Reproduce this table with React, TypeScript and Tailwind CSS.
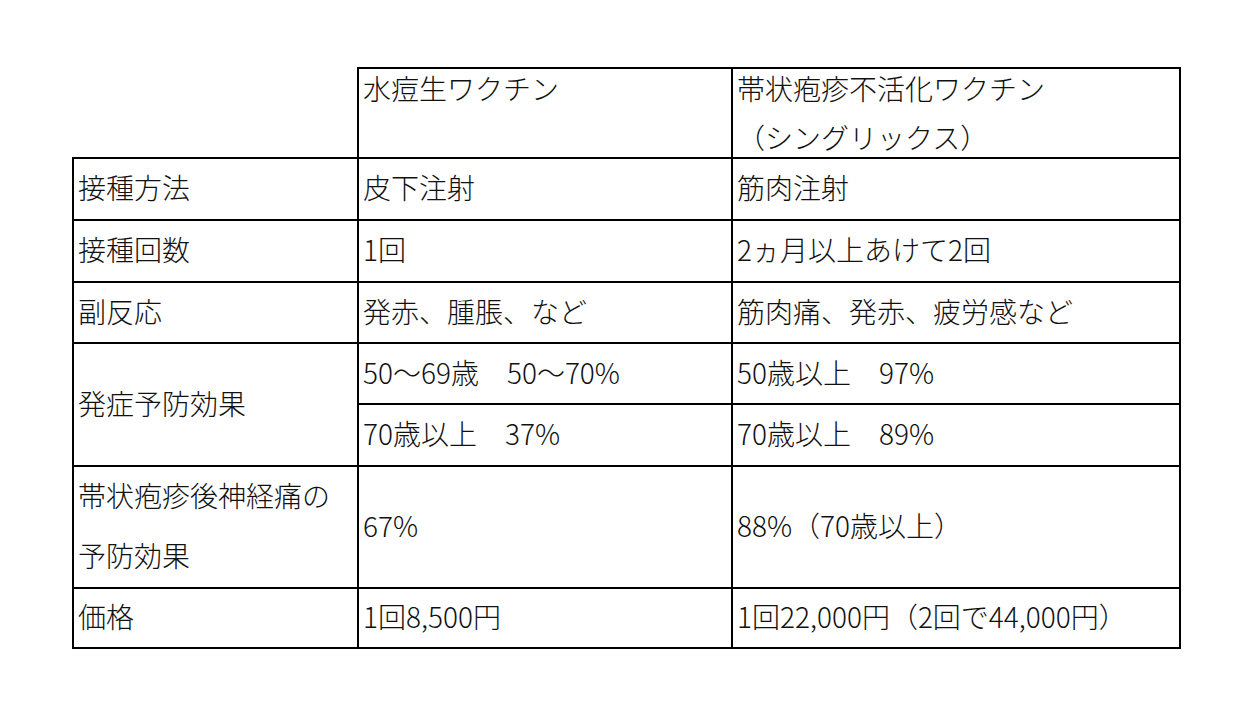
import React from "react";

const font = {
  fontFamily: '"Noto Sans CJK JP", "Noto Sans", sans-serif',
};

function Cell({
  children,
  className = "",
}: {
  children?: React.ReactNode;
  className?: string;
}) {
  return (
    <div
      className={
        "border-t-2 border-l-2 border-black flex items-center pl-[4px] pb-[4px] text-[28px] font-light leading-[40px] text-[#111] whitespace-nowrap " +
        className
      }
    >
      {children}
    </div>
  );
}

export default function App() {
  return (
    <div className="w-[1241px] h-[722px] bg-white overflow-hidden" style={font}>
      <div className="pt-[67px] pl-[72px]">
        <div className="grid grid-cols-[285px_374px_450px] grid-rows-[90px_62px_62px_61px_61px_62px_122px_62px]">
          {/* header */}
          <div />
          <div className="border-t-2 border-l-2 border-black pl-[4px] text-[28px] font-light leading-[49px] text-[#111] whitespace-nowrap">
            <div className="-mt-[5px]">水痘生ワクチン</div>
          </div>
          <div className="border-t-2 border-l-2 border-r-2 border-black pl-[4px] text-[28px] font-light leading-[49px] text-[#111] whitespace-nowrap">
            <div className="-mt-[5px]">
              <div>帯状疱疹不活化ワクチン</div>
              <div>（シングリックス）</div>
            </div>
          </div>

          <Cell>接種方法</Cell>
          <Cell>皮下注射</Cell>
          <Cell className="border-r-2">筋肉注射</Cell>

          <Cell>接種回数</Cell>
          <Cell>1回</Cell>
          <Cell className="border-r-2">2ヵ月以上あけて2回</Cell>

          <Cell>副反応</Cell>
          <Cell>発赤、腫脹、など</Cell>
          <Cell className="border-r-2">筋肉痛、発赤、疲労感など</Cell>

          <Cell className="row-span-2">発症予防効果</Cell>
          <Cell>50〜69歳　50〜70%</Cell>
          <Cell className="border-r-2">50歳以上　97%</Cell>
          <Cell>70歳以上　37%</Cell>
          <Cell className="border-r-2">70歳以上　89%</Cell>

          <Cell className="leading-[60px]">
            <div>
              <div>帯状疱疹後神経痛の</div>
              <div>予防効果</div>
            </div>
          </Cell>
          <Cell>67%</Cell>
          <Cell className="border-r-2">88%（70歳以上）</Cell>

          <Cell className="border-b-2">価格</Cell>
          <Cell className="border-b-2">1回8,500円</Cell>
          <Cell className="border-b-2 border-r-2">1回22,000円（2回で44,000円）</Cell>
        </div>
      </div>
    </div>
  );
}
